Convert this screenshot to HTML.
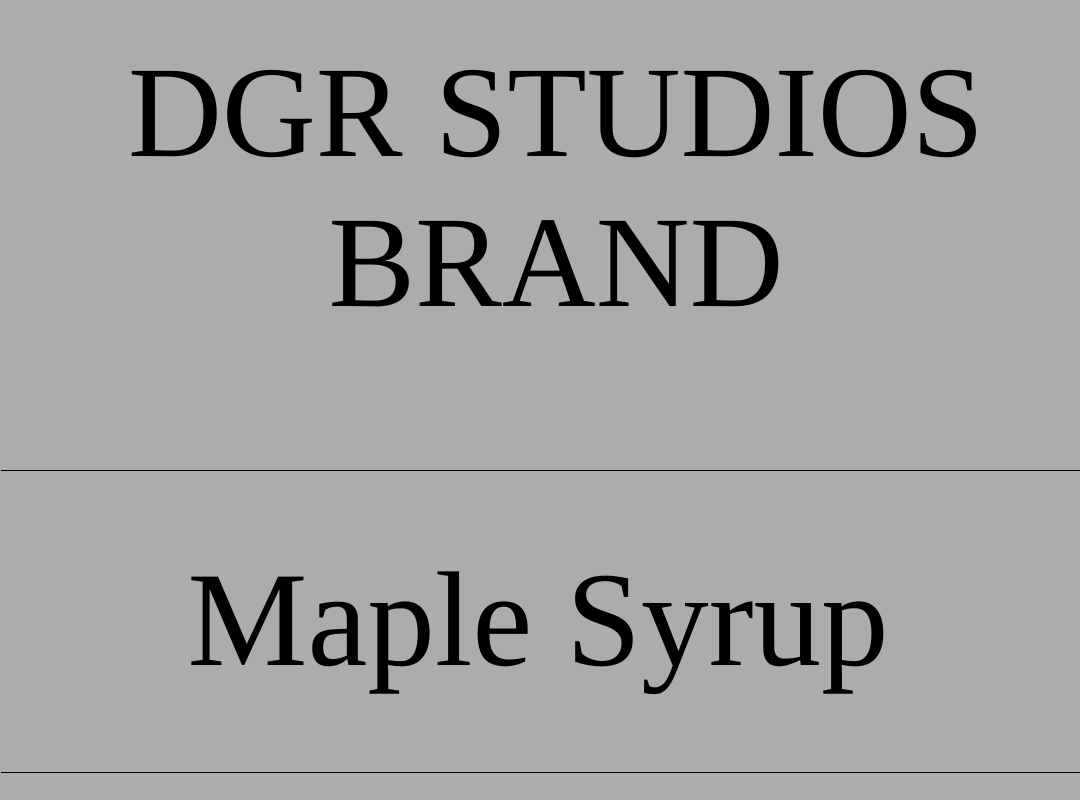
<!DOCTYPE html>
<html><head><style>
body{margin:0;width:1080px;height:800px;background:#adabac;position:relative;overflow:hidden;font-family:"Liberation Serif",serif;color:#000}
.t{position:absolute;left:0;width:1080px;text-align:center;font-size:130px;line-height:1;white-space:nowrap}
.l{position:absolute;left:1px;right:0;height:1px;background:#000}
</style></head><body>
<div class="t" style="top:48px;left:16px">DGR STUDIOS</div>
<div class="t" style="top:198px;left:16px">BRAND</div>
<div class="l" style="top:470px"></div>
<div class="t" style="top:553px;left:-2px;font-size:135px">Maple Syrup</div>
<div class="l" style="top:772px"></div>
</body></html>
